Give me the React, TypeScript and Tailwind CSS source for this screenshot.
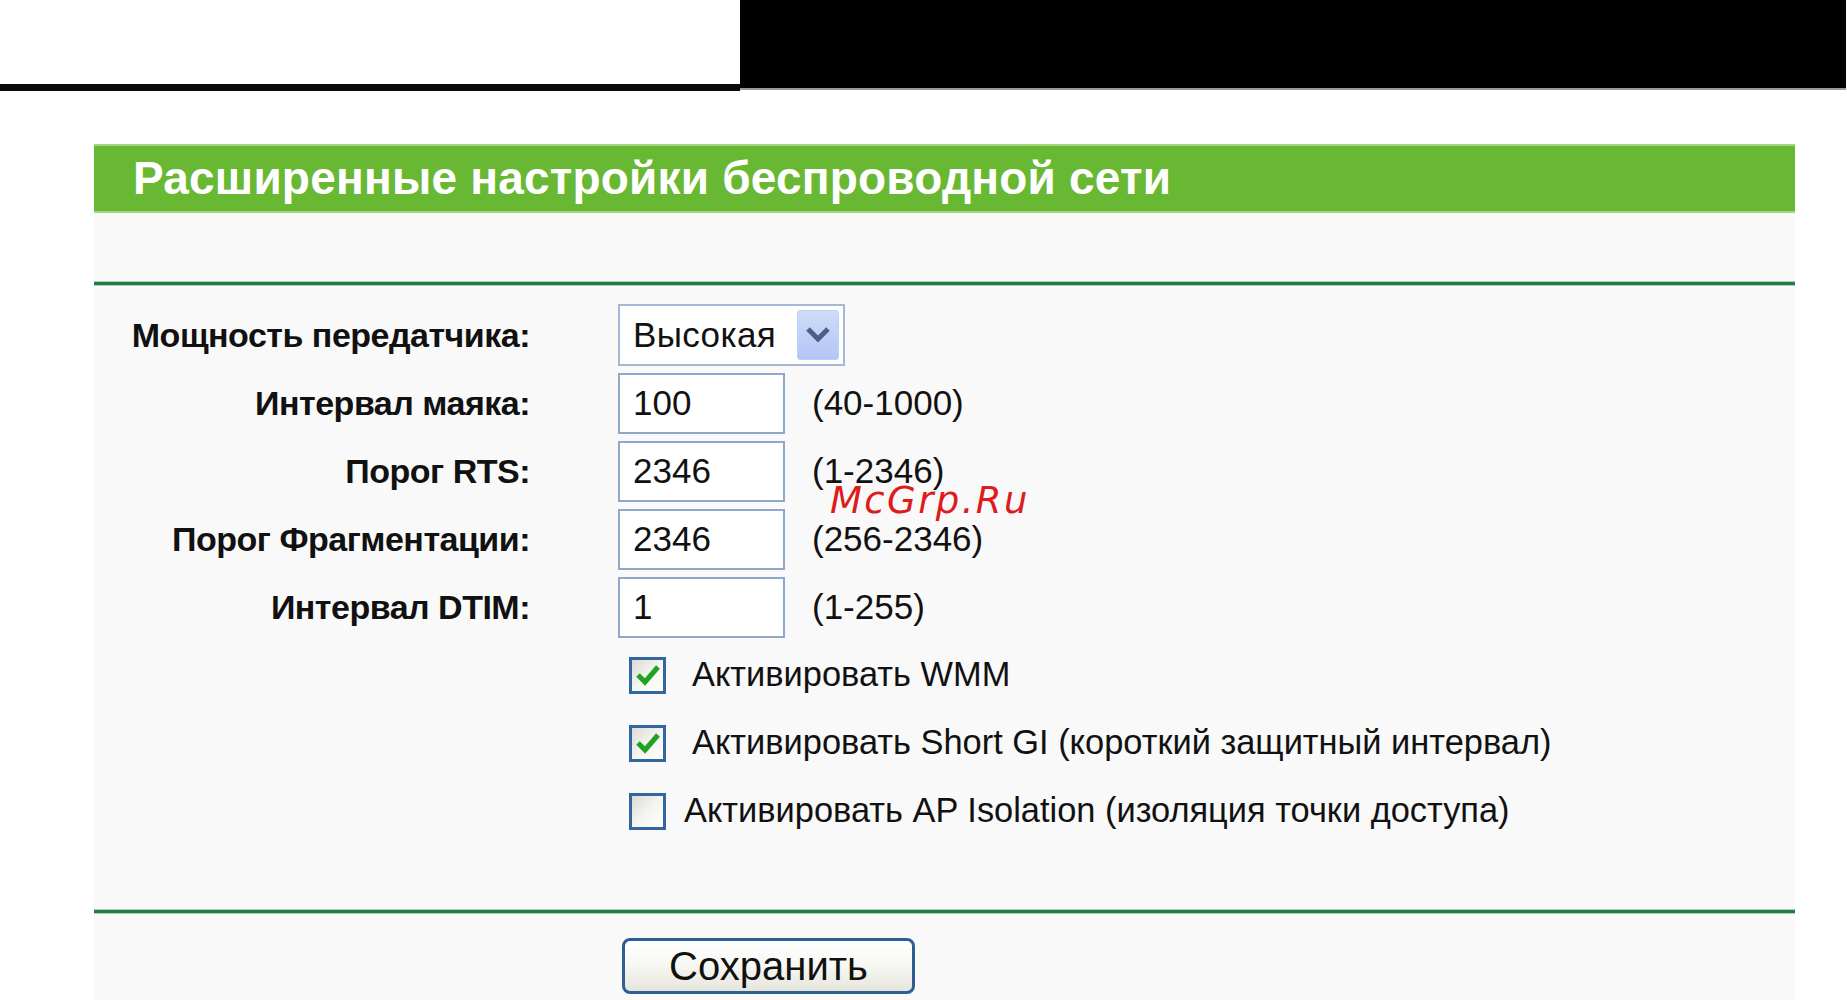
import React from "react";

const labels = [
  "Мощность передатчика:",
  "Интервал маяка:",
  "Порог RTS:",
  "Порог Фрагментации:",
  "Интервал DTIM:",
];

function TextInput({ value }: { value: string }) {
  return (
    <div className="w-[167px] h-[61px] border-2 border-[#8ea9c9] bg-white flex items-center pl-[13px] text-[35px] text-[#111]">
      {value}
    </div>
  );
}

function Check({ checked }: { checked: boolean }) {
  return (
    <div className="w-[37px] h-[37px] border-[3px] border-[#3366a0] bg-gradient-to-br from-[#dcdcd4] via-[#f4f4f0] to-white flex items-center justify-center">
      {checked && (
        <svg width="24" height="22" viewBox="0 0 24 22">
          <path d="M2 11 L9 18 L22 3" fill="none" stroke="#21a321" strokeWidth="5" strokeLinejoin="miter" />
        </svg>
      )}
    </div>
  );
}

function Line() {
  return <div className="h-[5px] bg-[#257a45] border-y border-[#a9d3b5]" />;
}

export default function App() {
  return (
    <div className="relative w-[1847px] h-[1000px] bg-white overflow-hidden font-['Liberation_Sans',Arial,sans-serif] text-[#111]">
      <div className="flex h-[91px]">
        <div className="w-[740px] flex flex-col justify-end">
          <div className="h-[7px] bg-[#0a0a0a]" />
        </div>
        <div className="w-[1106px] h-[90px] bg-black border-b-2 border-[#9a9a9a]" />
      </div>

      <div className="mt-[53px] ml-[94px] w-[1701px]">
        <div className="h-[69px] bg-[#69b834] border-y-2 border-[#a3d47f] pl-[39px] flex items-center text-white font-bold text-[46px] tracking-[0.2px]">
          Расширенные настройки беспроводной сети
        </div>
        <div className="bg-[#f9f9f9] h-[787px]">
          <div className="h-[68px]" />
          <Line />
          <div className="pt-[15px]">
            {labels.map((l, i) => (
              <div key={l} className="h-[68px] flex items-center">
                <div className="w-[437px] text-right font-bold text-[34px] tracking-[-0.5px] pr-[1px]">{l}</div>
                <div className="ml-[87px] flex items-center">
                  {i === 0 ? (
                    <div className="w-[227px] h-[62px] border-2 border-[#a5b9d6] bg-white flex items-center justify-between pl-[13px] pr-[4px] text-[35px]">
                      <span className="tracking-[0.4px]">Высокая</span>
                      <div className="w-[42px] h-[50px] rounded-[3px] bg-gradient-to-b from-[#cfdcfa] to-[#b2c6f4] border border-[#bcd0f6] flex items-center justify-center">
                        <svg width="26" height="18" viewBox="0 0 26 18">
                          <path d="M3 3 L13 13 L23 3" fill="none" stroke="#4d5f86" strokeWidth="5" />
                        </svg>
                      </div>
                    </div>
                  ) : (
                    <>
                      <TextInput value={["", "100", "2346", "2346", "1"][i]} />
                      <span className="ml-[27px] text-[35px]">{["", "(40-1000)", "(1-2346)", "(256-2346)", "(1-255)"][i]}</span>
                    </>
                  )}
                </div>
              </div>
            ))}
            {[
              { t: "Активировать WMM", c: true, g: 26 },
              { t: "Активировать Short GI (короткий защитный интервал)", c: true, g: 26 },
              { t: "Активировать AP Isolation (изоляция точки доступа)", c: false, g: 18 },
            ].map((r) => (
              <div key={r.t} className="h-[68px] flex items-center pl-[535px]">
                <Check checked={r.c} />
                <span className="text-[34.4px]" style={{ marginLeft: r.g }}>{r.t}</span>
              </div>
            ))}
          </div>
          <div className="h-[64px]" />
          <Line />
          <div className="pl-[528px] pt-[24px]">
            <button className="w-[293px] h-[56px] rounded-[8px] border-[3px] border-[#2f5e93] bg-gradient-to-b from-white via-[#f7f7f3] to-[#e6e5dc] text-[40px] flex items-center justify-center font-['Liberation_Sans',Arial,sans-serif]">
              Сохранить
            </button>
          </div>
        </div>
      </div>

      <div className="absolute left-[830px] top-[473px] text-[#dd1c1c] italic text-[37px] tracking-[2.4px] font-['DejaVu_Sans',sans-serif]">
        McGrp.Ru
      </div>
    </div>
  );
}
